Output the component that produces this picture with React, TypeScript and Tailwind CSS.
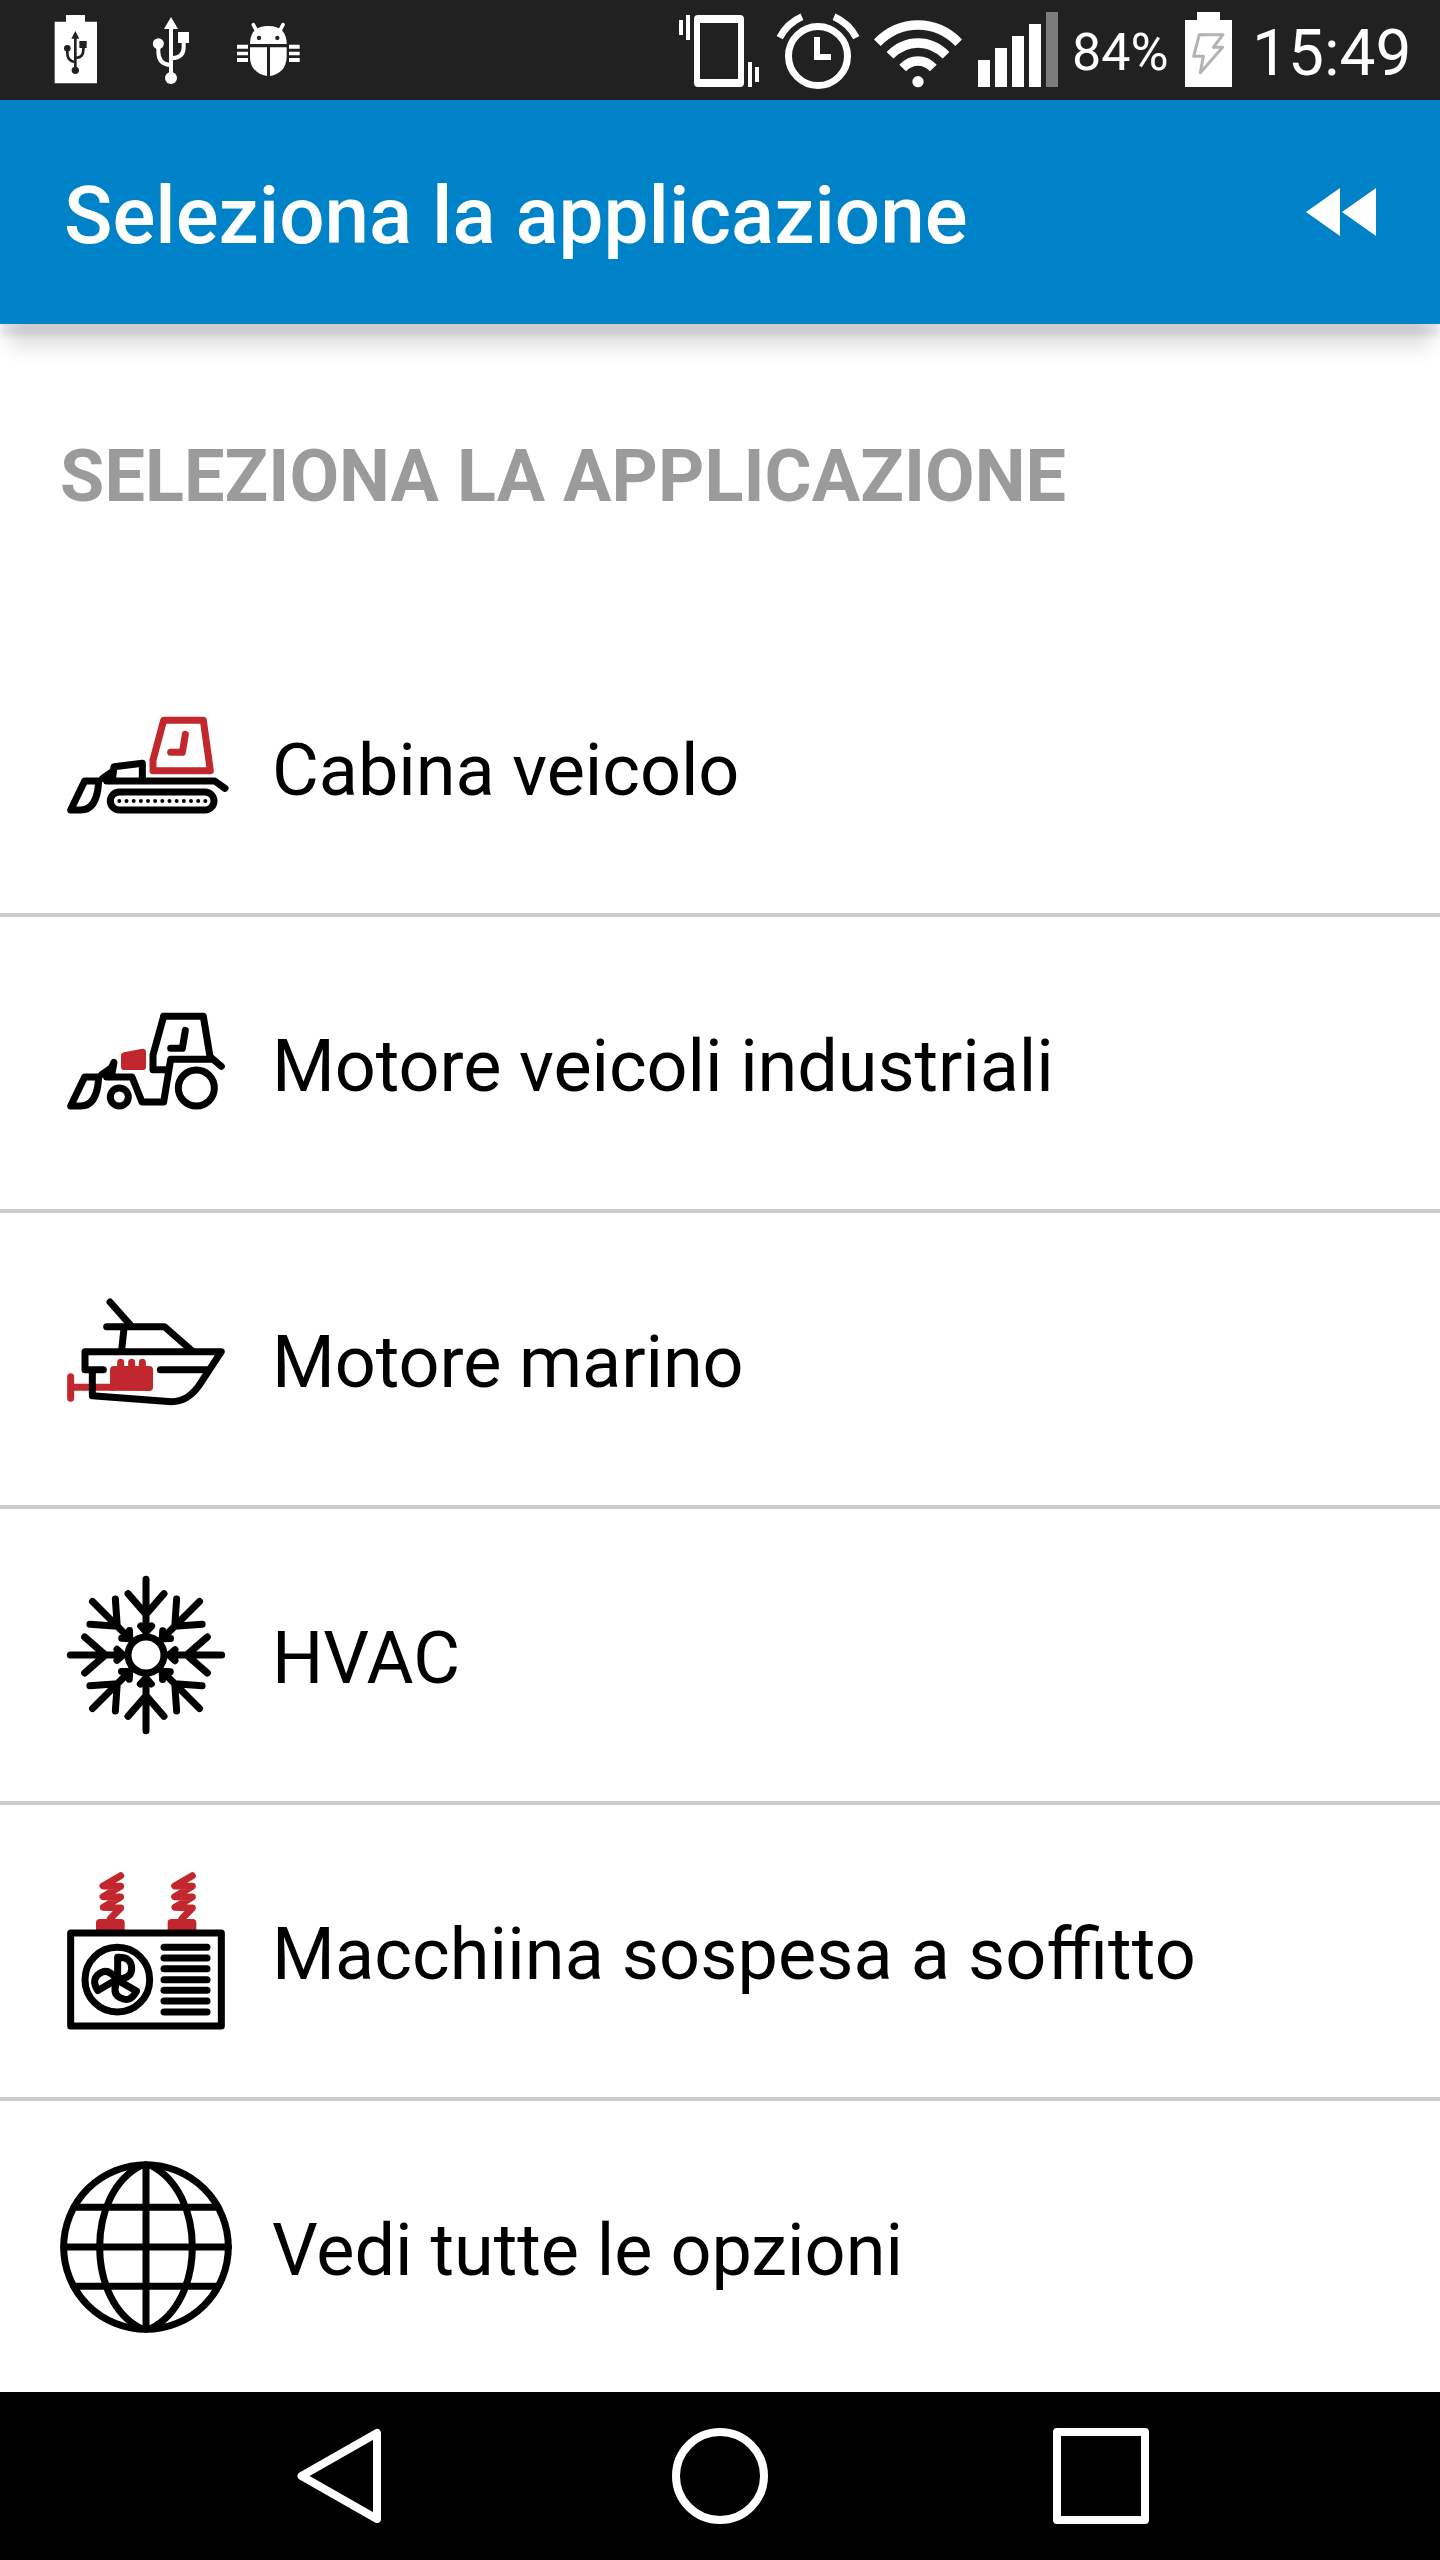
import type { ReactNode } from "react";

const RED = "#c1272d";

// every list icon is drawn on a 516 unit square, shown at 172px
function Icon({ viewBox, children }: { viewBox: string; children: ReactNode }) {
    return (
        <svg
            viewBox={viewBox}
            className="h-43 w-43 shrink-0"
            fill="none"
            stroke="#000"
            strokeWidth={21}
            strokeLinecap="round"
            strokeLinejoin="round"
        >
            {children}
        </svg>
    );
}

function BulldozerIcon() {
    return (
        <Icon viewBox="30 -57 516 516">
            <path d="M341 61H460L481 212H309V180Z" stroke={RED} />
            <path d="M406 103L397 157H362" stroke={RED} />
            <path d="M104 243H146Q142 330 92 330H62Z" />
            <path d="M158 235L190 213" />
            <path d="M170 243H494L525 265" />
            <path d="M188 232L192 200L277 190V240" />
            <rect x="181" y="276" width="311" height="54" rx="27" />
            <path d="M208 303H467" strokeWidth={12} strokeDasharray="0 21.5" />
        </Icon>
    );
}

function TractorIcon() {
    return (
        <Icon viewBox="30 -69 516 516">
            <path d="M341 49H460L480 170L514 199" />
            <path d="M341 49L309 165V209H350" />
            <path d="M406 91L397 145H362" />
            <path d="M170 231H246L276 306H341L362 178H484" />
            <path d="M104 231H146Q142 318 92 318H62Z" />
            <path d="M155 224L184 204L192 187L186 220" />
            <circle cx="208" cy="291" r="27" />
            <circle cx="439" cy="264" r="54" />
            <path
                d="M222 157L277 146Q288 146 288 156V200Q288 210 278 210H223Q213 210 213 200V167Q213 159 222 157Z"
                fill={RED}
                stroke="none"
            />
        </Icon>
    );
}

function BoatIcon() {
    return (
        <Icon viewBox="30 -51 516 516">
            <path d="M62 260V325M62 292H190" stroke={RED} />
            <path d="M212 217V240M245 217V240M277 217V240" stroke={RED} />
            <path
                d="M180 302V240Q180 228 192 228H298Q309 228 309 239V292Q309 303 298 303Z"
                fill={RED}
                stroke="none"
            />
            <path d="M180 36L242 106" />
            <path d="M170 110H343L428 184" />
            <path d="M222 115L215 180" />
            <path d="M160 239H105V185H514L446 288Q412 335 365 335L127 317V244" />
            <path d="M331 239H475" />
        </Icon>
    );
}

const arms = [0, 45, 90, 135, 180, 225, 270, 315];

function SnowflakeIcon() {
    return (
        <Icon viewBox="30 27 516 516">
            <circle cx="288" cy="285" r="54" />
            {arms.map((angle) => (
                <path
                    key={angle}
                    d="M288 58V228M234 101L288 163L342 101M272 198L288 216L305 198"
                    transform={`rotate(${angle} 288 285)`}
                />
            ))}
        </Icon>
    );
}

const vents = [262, 294, 326, 359, 391, 423, 456];
const blades = [0, 120, 240];

function CeilingUnitIcon() {
    return (
        <Icon viewBox="30 15 516 516">
            {[0, 215].map((x) => (
                <g key={x} transform={`translate(${x} 0)`}>
                    <path
                        d="M212 47L159 78L212 79L159 110L212 111L160 142L212 144L181 176"
                        stroke={RED}
                    />
                    <path
                        d="M138 214V188Q138 177 149 177H213Q224 177 224 188V214Z"
                        fill={RED}
                        stroke="none"
                    />
                </g>
            ))}
            <rect x="62" y="219" width="452" height="279" />
            <circle cx="202" cy="359" r="97" />
            {blades.map((angle) => (
                <path
                    key={angle}
                    d="M203 358V292Q245 290 245 326Q245 354 203 358Z"
                    transform={`rotate(${angle} 202 359)`}
                />
            ))}
            {vents.map((y) => (
                <path key={y} d={`M342 ${y}H471`} />
            ))}
        </Icon>
    );
}

function GlobeIcon() {
    return (
        <Icon viewBox="30 63 516 516">
            <circle cx="288" cy="321" r="247" />
            <path d="M288 74V568M41 321H535M72 202H504M72 439H504" />
            <path d="M274 76C190 118 149 220 149 321S190 524 274 566" />
            <path d="M302 76C386 118 427 220 427 321S386 524 302 566" />
        </Icon>
    );
}

const items = [
    { label: "Cabina veicolo", icon: <BulldozerIcon />, tracking: "tracking-[-0.06px]" },
    { label: "Motore veicoli industriali", icon: <TractorIcon />, tracking: "tracking-[-0.08px]" },
    { label: "Motore marino", icon: <BoatIcon />, tracking: "tracking-[-0.08px]" },
    { label: "HVAC", icon: <SnowflakeIcon />, tracking: "tracking-normal" },
    { label: "Macchiina sospesa a soffitto", icon: <CeilingUnitIcon />, tracking: "tracking-[0.1px]" },
    { label: "Vedi tutte le opzioni", icon: <GlobeIcon />, tracking: "tracking-normal" },
];

function StatusBar() {
    return (
        <div className="flex h-25 shrink-0 items-center bg-[#212121] text-white">
            {/* battery with usb sign */}
            <svg viewBox="162 0 132 300" className="ml-[54px] h-25 w-11">
                <path d="M164 65H198V45H255V65H291V250H164Z" fill="#fff" />
                <g fill="#212121">
                    <path d="M226 93L238 116H214Z" />
                    <circle cx="202" cy="145" r="10" />
                    <circle cx="226" cy="211" r="11" />
                    <path d="M238 123H260V144H238Z" />
                </g>
                <path
                    d="M226 112V210M202 145V160Q202 184 225 186M250 140V150Q250 172 228 174"
                    fill="none"
                    stroke="#212121"
                    strokeWidth={8}
                />
            </svg>
            {/* usb */}
            <svg viewBox="456 0 114 300" className="ml-[54px] h-25 w-[38px]">
                <g fill="#fff">
                    <path d="M513 51L534 87H492Z" />
                    <circle cx="475" cy="131" r="16.5" />
                    <circle cx="513" cy="234" r="18" />
                    <path d="M534 96H567V129H534Z" />
                </g>
                <path
                    d="M513 80V234M475 131V155Q475 193 512 195M551 125V142Q551 174 515 175"
                    fill="none"
                    stroke="#fff"
                    strokeWidth={12}
                />
            </svg>
            {/* debug bug */}
            <svg viewBox="708 0 192 300" className="ml-[46px] h-25 w-16">
                <g fill="#fff">
                    <path d="M750 132Q750 78 805 78T860 132Z" />
                    <path d="M750 142H801V228C772 224 750 204 750 170Z" />
                    <path d="M860 142H810V228C838 224 860 204 860 170Z" />
                    <path d="M711 134H744V146H711ZM711 155H744V166H711ZM711 174H744V186H711Z" />
                    <path d="M867 134H899V146H867ZM867 155H899V166H867ZM867 174H899V186H867Z" />
                </g>
                <path
                    d="M760 74L772 97M849 74L837 97"
                    stroke="#fff"
                    strokeWidth={11}
                    strokeLinecap="round"
                />
                <circle cx="777" cy="114" r="6.5" fill="#212121" />
                <circle cx="832" cy="114" r="6.5" fill="#212121" />
            </svg>
            {/* vibrate */}
            <svg viewBox="54 0 246 300" className="ml-auto h-25 w-[82px]">
                <path
                    fillRule="evenodd"
                    d="M114 45H240Q252 45 252 57V249Q252 261 240 261H114Q102 261 102 249V57Q102 45 114 45ZM120 69V237H234V69Z"
                    fill="#fff"
                />
                <path
                    d="M57 60H69V105H57ZM78 45H90V120H78ZM264 186H276V261H264ZM285 201H297V246H285Z"
                    fill="#fff"
                />
            </svg>
            {/* alarm */}
            <svg
                viewBox="345 0 258 300"
                className="ml-[15px] h-25 w-[86px]"
                fill="none"
                stroke="#fff"
            >
                <circle cx="474" cy="168" r="88.5" strokeWidth={21} />
                <path d="M471 111V171H513" strokeWidth={18} />
                <path d="M359 113Q382 69 426 50M589 113Q566 69 522 50" strokeWidth={21} />
            </svg>
            {/* wifi */}
            <svg viewBox="642 0 264 300" className="ml-[13px] h-25 w-[88px]">
                <g fill="none" stroke="#fff" strokeWidth={28}>
                    <path d="M652 128Q704 75 774 75T896 128" />
                    <path d="M690 166Q726 129 774 129T858 166" />
                    <path d="M728 204Q748 183 774 183T820 204" />
                </g>
                <circle cx="774" cy="245" r="17" fill="#fff" />
            </svg>
            {/* signal */}
            <svg viewBox="954 0 240 300" className="ml-4 h-25 w-20">
                <path
                    d="M954 180H990V261H954ZM1005 144H1041V261H1005ZM1056 108H1092V261H1056ZM1107 72H1143V261H1107Z"
                    fill="#fff"
                />
                <path d="M1158 36H1194V261H1158Z" fill="#7c7c7c" />
            </svg>
            <span className="ml-3.5 w-[113px] pt-1.5 text-[52px] leading-none">84%</span>
            {/* charging battery */}
            <svg viewBox="435 0 141 300" className="h-25 w-[47px]">
                <path d="M435 60H471V36H540V60H576V261H435Z" fill="#fff" />
                <path
                    d="M478 104H549L520 142H548L481 218L490 169H461Z"
                    fill="none"
                    stroke="#b3b3b3"
                    strokeWidth={9}
                    strokeLinejoin="round"
                />
            </svg>
            <span className="ml-5 w-[188px] pt-2 text-[64px] leading-none">15:49</span>
        </div>
    );
}

function Header() {
    return (
        <header className="z-10 flex h-56 shrink-0 items-center justify-between bg-[#0082c8] px-16 text-white shadow-[0_12px_5px_0_rgba(0,0,0,0.08),0_32px_18px_-9px_rgba(0,0,0,0.13)]">
            <h1 className="pt-2 text-[80px] leading-none font-medium">
                Seleziona la applicazione
            </h1>
            <svg viewBox="0 0 70 48" className="h-12 w-[70px]" fill="#fff">
                <path d="M34 0V48L0 24ZM70 0V48L36 24Z" />
            </svg>
        </header>
    );
}

function NavBar() {
    return (
        <nav className="flex h-42 shrink-0 items-center gap-[285px] bg-black pl-[291px]">
            <svg
                viewBox="0 0 96 96"
                className="size-24"
                fill="none"
                stroke="#fff"
                strokeWidth={8}
                strokeLinejoin="round"
            >
                <path d="M86 5V91L10.5 48Z" />
            </svg>
            <div className="size-24 rounded-full border-8 border-white" />
            <div className="size-24 rounded-[4px] border-8 border-white" />
        </nav>
    );
}

function App() {
    return (
        <div className="flex h-[2560px] w-[1440px] flex-col overflow-hidden bg-white font-[Roboto,sans-serif]">
            <StatusBar />
            <Header />
            <main className="min-h-0 flex-1 overflow-hidden">
                <h2 className="h-[297px] pt-[111px] pl-[60px] text-[72px] leading-[84px] font-bold tracking-[0.06px] text-[#9b9b9b]">
                    SELEZIONA LA APPLICAZIONE
                </h2>
                <ul>
                    {items.map((item) => (
                        <li
                            key={item.label}
                            className="flex h-74 items-center gap-10 border-b-4 border-[#cccccc] pl-[60px] text-[72px] leading-none"
                        >
                            {item.icon}
                            {/* letter-spacing turns ligatures off, so ask for them */}
                            <span className={`pt-2 [font-feature-settings:'liga'] ${item.tracking}`}>
                                {item.label}
                            </span>
                        </li>
                    ))}
                </ul>
            </main>
            <NavBar />
        </div>
    );
}

export default App;
